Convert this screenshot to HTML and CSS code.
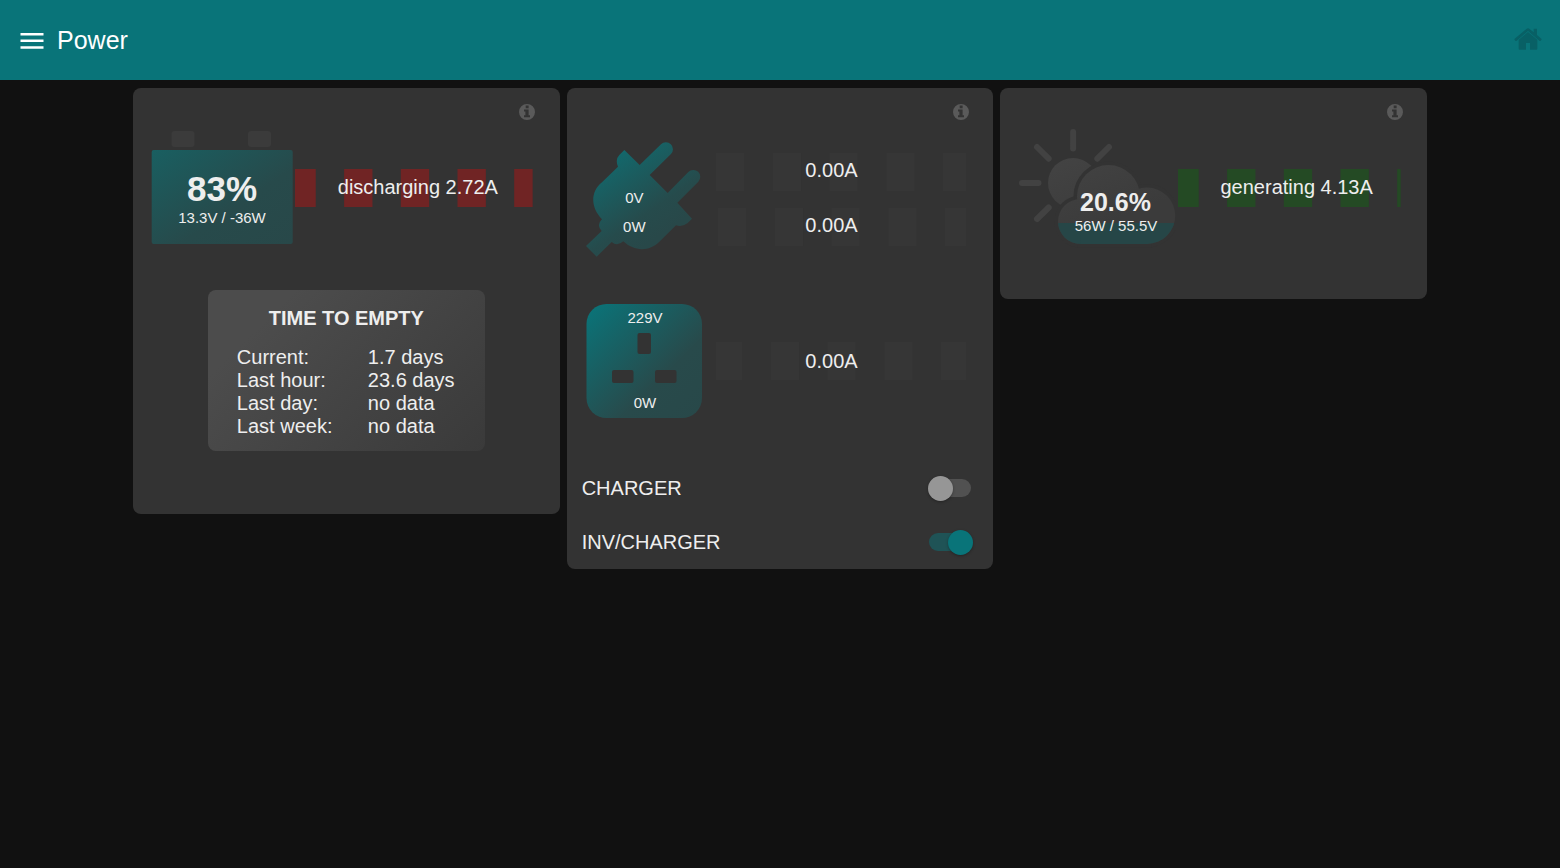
FILE: index.html
```html
<!DOCTYPE html>
<html lang="en">
<head>
<meta charset="utf-8">
<meta name="viewport" content="width=device-width, initial-scale=1">
<title>Power</title>
<link rel="stylesheet" href="styles.css">
</head>
<body>
<svg class="defs" width="0" height="0" aria-hidden="true">
  <defs>
    <symbol id="info" viewBox="0 0 16 16">
      <path fill-rule="evenodd" d="M8 0a8 8 0 1 1 0 16A8 8 0 0 1 8 0zM6.7 1.600v2.700h2.900V1.600zM5 5.500v1.900h1.400v3.900H5V13.200h6v-1.900H9.600V5.500z"/>
    </symbol>
  </defs>
</svg>

<header class="toolbar">
  <button class="icon-button" type="button" aria-label="Menu">
    <svg width="24" height="18" viewBox="0 -2 24 18"><path d="M0.5 0h23v2.5h-23zM0.5 6.600h23v2.500h-23zM0.5 13.200h23V15.700h-23z"/></svg>
  </button>
  <h1 class="toolbar-title">Power</h1>
  <a class="home-link" href="#" aria-label="Home">
    <svg width="28" height="24" viewBox="0 0 84 72"><path d="M42 12 14 35v27q0 3 3 3h19V45h12v20h19q3 0 3-3V35z"/><path d="M37 3q5-4 10 0l12 10V2h10v19l13 11q2 2 0 4l-2 2q-2 2-4 0L42 9 8 38q-2 2-4 0l-2-2q-2-2 0-4z"/></svg>
  </a>
</header>

<main class="cards">
  <section class="card card-battery" aria-label="Battery">
    <button class="icon-button info-button" type="button" aria-label="Battery information"><svg width="16" height="16"><use href="#info"/></svg></button>
    <div class="gauge-row gauge-row-tight">
      <svg class="gauge" width="142" height="114" viewBox="151 131 142 114" role="img" aria-label="Battery level">
        <defs><linearGradient id="battery-fill" x1="0" y1="0" x2="1" y2="1"><stop offset="0" stop-color="#195f61"/><stop offset=".6" stop-color="#274a4b"/><stop offset="1" stop-color="#284849"/></linearGradient></defs>
        <rect x="171.500" y="131" width="23" height="16" rx="3" fill="#3b3b3b"/>
        <rect x="248" y="131" width="23" height="16" rx="3" fill="#3b3b3b"/>
        <rect x="151.700" y="150" width="141" height="94" rx="2" fill="url(#battery-fill)"/>
        <text class="value value-large" x="222" y="201">83%</text>
        <text class="value" x="222" y="223">13.3V / -36W</text>
      </svg>
      <div class="flow flow-out">
        <svg class="flow-band" aria-hidden="true"><line x1="0" y1="19" x2="100%" y2="19" stroke-dasharray="28.35" stroke-dashoffset="7.6"/></svg>
        <span class="flow-label">discharging 2.72A</span>
      </div>
    </div>
    <table class="estimate">
      <caption>TIME TO EMPTY</caption>
      <tbody>
        <tr><th scope="row">Current:</th><td>1.7 days</td></tr>
        <tr><th scope="row">Last hour:</th><td>23.6 days</td></tr>
        <tr><th scope="row">Last day:</th><td>no data</td></tr>
        <tr><th scope="row">Last week:</th><td>no data</td></tr>
      </tbody>
    </table>
  </section>

  <section class="card card-mains" aria-label="Mains">
    <button class="icon-button info-button" type="button" aria-label="Mains information"><svg width="16" height="16"><use href="#info"/></svg></button>
    <div class="gauge-row">
      <svg class="gauge" width="116" height="115" viewBox="45 66 348 345" role="img" aria-label="Mains input">
        <defs><linearGradient id="plug-fill" gradientUnits="userSpaceOnUse" x1="90" y1="100" x2="260" y2="350"><stop offset="0" stop-color="#106c70"/><stop offset=".75" stop-color="#264b4c"/><stop offset="1" stop-color="#284849"/></linearGradient></defs>
        <path fill="url(#plug-fill)" d="M160 90 206 135 270 73A20.500 20.500 0 0 1 300 102L236 165 290 219 352 156A20.500 20.500 0 0 1 382 185L319 248 363 296 350 309Q334 322 315 316L265 365C235 395 190 395 157 364Q139 380 122 366L77 410 45 378 92 333Q75 315 93 298C58 262 58 215 93 187L141 140Q132 118 145 105z"/>
        <text class="value value-scaled" x="190" y="249">0V</text>
        <text class="value value-scaled" x="190" y="336">0W</text>
      </svg>
      <div class="flow-stack">
        <div class="flow flow-idle">
          <svg class="flow-band" aria-hidden="true"><line x1="0" y1="19" x2="100%" y2="19" stroke-dasharray="28.35"/></svg>
          <span class="flow-label">0.00A</span>
        </div>
        <div class="flow flow-idle">
          <svg class="flow-band" aria-hidden="true"><line x1="2" y1="19" x2="100%" y2="19" stroke-dasharray="28.35"/></svg>
          <span class="flow-label">0.00A</span>
        </div>
      </div>
    </div>
    <div class="gauge-row gauge-row-output">
      <svg class="gauge" width="116" height="114" viewBox="586 304 116 114" role="img" aria-label="Inverter output">
        <defs><linearGradient id="socket-fill" x1="0" y1="0" x2="1" y2="1"><stop offset="0" stop-color="#09757a"/><stop offset=".65" stop-color="#284a4b"/><stop offset="1" stop-color="#284849"/></linearGradient></defs>
        <rect x="586.500" y="304" width="115.500" height="114" rx="20" fill="url(#socket-fill)"/>
        <g fill="#333">
          <rect x="637.500" y="333" width="13.500" height="21" rx="2"/>
          <rect x="612" y="370" width="21.500" height="13" rx="2"/>
          <rect x="655" y="370" width="21.500" height="13" rx="2"/>
        </g>
        <text class="value" x="645" y="323">229V</text>
        <text class="value" x="645" y="408">0W</text>
      </svg>
      <div class="flow flow-idle">
        <svg class="flow-band" aria-hidden="true"><line x1="0" y1="19" x2="100%" y2="19" stroke-dasharray="28.35" stroke-dashoffset="2"/></svg>
        <span class="flow-label">0.00A</span>
      </div>
    </div>
    <div class="switches">
      <label class="switch-row"><span>CHARGER</span><input class="switch" type="checkbox" role="switch"></label>
      <label class="switch-row"><span>INV/CHARGER</span><input class="switch" type="checkbox" role="switch" checked></label>
    </div>
  </section>

  <section class="card card-solar" aria-label="Solar">
    <button class="icon-button info-button" type="button" aria-label="Solar information"><svg width="16" height="16"><use href="#info"/></svg></button>
    <div class="gauge-row gauge-row-tight">
      <svg class="gauge" width="157" height="120" viewBox="1019 128 157 120" role="img" aria-label="Solar output">
        <defs>
          <linearGradient id="sky-fill" gradientUnits="userSpaceOnUse" x1="1050" y1="130" x2="1090" y2="230"><stop offset="0" stop-color="#464646"/><stop offset="1" stop-color="#3b3b3b"/></linearGradient>
          <clipPath id="cloud-level"><rect x="1050" y="223" width="130" height="22"/></clipPath>
          <g id="cloud"><circle cx="1108.500" cy="196.500" r="31.500"/><circle cx="1080.500" cy="221.500" r="22.500"/><circle cx="1147" cy="215.800" r="28.200"/><path d="M1078 199h50l20 10v35h-67z"/></g>
        </defs>
        <path d="M1073.100 132v16.500M1022 183h16.500M1037 147l11.700 11.700M1109 147l-11.700 11.700M1048.700 207.500 1037 219" stroke="#424242" stroke-width="6" stroke-linecap="round"/>
        <circle cx="1073" cy="183" r="25" fill="url(#sky-fill)"/>
        <use href="#cloud" fill="#333" stroke="#333" stroke-width="7"/>
        <use href="#cloud" fill="url(#sky-fill)"/>
        <g clip-path="url(#cloud-level)"><use href="#cloud" fill="#264647"/></g>
        <text class="value value-medium" x="1115.500" y="211">20.6%</text>
        <text class="value" x="1116" y="231">56W / 55.5V</text>
      </svg>
      <div class="flow flow-in">
        <svg class="flow-band" aria-hidden="true"><line x1="0" y1="19" x2="100%" y2="19" stroke-dasharray="28.35" stroke-dashoffset="7.6"/></svg>
        <span class="flow-label">generating 4.13A</span>
      </div>
    </div>
  </section>
</main>
</body>
</html>
```
FILE: styles.css
```css
* {
  box-sizing: border-box;
}

body {
  margin: 0;
  min-height: 100vh;
  background: #111;
  color: #eee;
  font: 20px/23px "Liberation Sans", Arial, sans-serif;
}

svg {
  display: block;
}

.defs {
  position: absolute;
}

.toolbar {
  display: flex;
  align-items: center;
  height: 80px;
  padding: 0 18px 0 20px;
  background: #097479;
  color: #fff;
}

.icon-button {
  display: block;
  padding: 0;
  border: 0;
  background: none;
  color: inherit;
  fill: currentColor;
  cursor: pointer;
}

.toolbar-title {
  flex: 1;
  margin: 0 0 0 13px;
  font-size: 25px;
  line-height: 30px;
  font-weight: 400;
}

.home-link {
  fill: #086065;
}

.cards {
  display: grid;
  grid-template-columns: repeat(3, minmax(0, 1fr));
  align-items: start;
  gap: 7px;
  max-width: 1294px;
  margin: 8px auto;
}

.card {
  padding: 16px 27px 0 19px;
  border-radius: 8px;
  background: #333;
}

.card-battery {
  padding: 16px 18px 63px;
}

.card-solar {
  padding-right: 26px;
  padding-bottom: 51px;
}

.info-button {
  margin: 0 -3px 0 auto;
  color: #5a5a5a;
}

.card-battery .info-button {
  margin-right: 7px;
}

.card-solar .info-button {
  margin-right: -2px;
}

.gauge-row {
  display: flex;
  align-items: center;
  gap: 14px;
  margin-top: 22px;
}

.gauge-row-tight {
  gap: 2px;
  margin-top: 8px;
}

.card-battery .gauge-row {
  margin-top: 11px;
  padding-right: 9px;
}

.gauge-row-output {
  margin-top: 47px;
}

.gauge {
  flex: none;
}

.value {
  fill: #eee;
  font-size: 15px;
  text-anchor: middle;
}

.value-scaled {
  font-size: 45px;
}

.value-medium {
  font-size: 25px;
  font-weight: 700;
}

.value-large {
  font-size: 35px;
  font-weight: 700;
}

.flow-stack {
  display: grid;
  flex: 1;
  gap: 17px;
}

.flow {
  display: grid;
  flex: 1;
  align-items: center;
  min-width: 0;
  height: 38px;
}

.flow-band,
.flow-label {
  grid-area: 1 / 1;
}

.flow-band {
  width: 100%;
  height: 38px;
  stroke-width: 38px;
}

.flow-label {
  padding-bottom: 2px;
  text-align: center;
}

.flow-out {
  stroke: #702424;
}

.flow-in {
  stroke: #244a24;
}

.flow-idle {
  stroke: #363636;
}

.flow-out .flow-label {
  padding-left: 8px;
}

.flow-in .flow-label {
  padding-left: 14px;
}

.flow-idle .flow-label {
  padding-right: 19px;
}

.flow-stack .flow-label {
  padding-bottom: 4px;
}

.gauge-row-output .flow-label {
  padding-bottom: 0;
}

.estimate {
  display: grid;
  width: 277px;
  margin: 45px auto 0;
  padding: 17px 29px 13px;
  border-radius: 8px;
  background: linear-gradient(135deg, #4c4c4c 20%, #3a3a3a);
}

.estimate caption {
  display: block;
  margin-bottom: 16px;
  font-weight: 700;
}

.estimate tr {
  display: grid;
  grid-template-columns: 131px 1fr;
}

.estimate th,
.estimate td {
  padding: 0;
  text-align: left;
  font-weight: 400;
}

.switches {
  margin: 43px -5px 0 -4px;
}

.switch-row {
  display: flex;
  align-items: center;
  justify-content: space-between;
  height: 54px;
}

.switch {
  appearance: none;
  display: flex;
  align-items: center;
  width: 42px;
  height: 18px;
  margin: 0;
  border-radius: 9px;
  background: #515151;
  cursor: pointer;
}

.switch::before {
  content: "";
  flex: none;
  width: 25px;
  height: 25px;
  margin-left: -1px;
  border-radius: 50%;
  background: #969696;
  box-shadow: 0 1px 3px rgba(0, 0, 0, 0.3);
}

.switch:checked {
  background: #1f5356;
}

.switch:checked::before {
  margin-left: 19px;
  background: #097479;
}

@media (max-width: 1250px) {
  .cards {
    grid-template-columns: minmax(0, 427px);
    justify-content: center;
  }
}
```
